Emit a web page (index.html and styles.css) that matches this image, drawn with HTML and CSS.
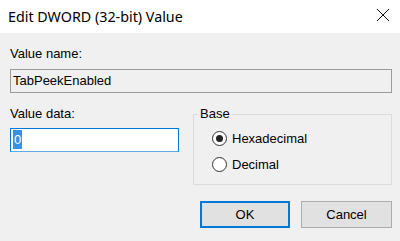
FILE: index.html
```html
<!DOCTYPE html>
<html lang="en">
<head>
    <meta charset="UTF-8">
    <meta name="viewport" content="width=device-width, initial-scale=1.0">
    <title>Edit DWORD (32-bit) Value</title>
    <link rel="stylesheet" href="styles.css">
</head>
<body>
    <!-- Title Bar -->
    <div class="titlebar">
        <div class="title">Edit DWORD (32-bit) Value</div>
        <div class="close">
            <svg width="14" height="14" viewBox="0 0 14 14">
                <path d="M1 1 L13 13 M13 1 L1 13" stroke="#111" stroke-width="1" fill="none"/>
            </svg>
        </div>
    </div>

    <!-- Dialog Body -->
    <div class="content">
        <div class="label">Value name:</div>
        <div class="textbox readonly">TabPeekEnabled</div>

        <div class="row">
            <div class="col">
                <div class="label">Value data:</div>
                <div class="textbox focused"><span class="selected">0</span></div>
            </div>

            <fieldset class="group">
                <legend>Base</legend>
                <div class="radios">
                    <div class="radio">
                        <span class="circle checked"></span>
                        <span>Hexadecimal</span>
                    </div>
                    <div class="radio">
                        <span class="circle"></span>
                        <span>Decimal</span>
                    </div>
                </div>
            </fieldset>
        </div>

        <div class="buttons">
            <div class="btn default">OK</div>
            <div class="btn">Cancel</div>
        </div>
    </div>
</body>
</html>
```

FILE: styles.css
```css
/* Classic Windows dialog */
:root {
    --dialog-bg: #f0f0f0;
    --text-color: #000;
    --accent: #0078d7;
    --border: #a0a0a0;
}

body {
    margin: 0;
    background-color: var(--dialog-bg);
    color: var(--text-color);
    font-family: 'Liberation Sans', Arial, sans-serif;
    font-size: 13px;
    width: 400px;
    height: 241px;
    overflow: hidden;
}

.titlebar {
    height: 33px;
    background-color: #fff;
    display: flex;
    align-items: center;
    justify-content: space-between;
}

.title {
    font-family: 'Noto Sans', 'Open Sans', sans-serif;
    font-size: 14.3px;
    padding-left: 8px;
    padding-bottom: 1px;
}

.close {
    width: 14px;
    height: 14px;
    margin-right: 10px;
    margin-top: -3px;
}

.close svg {
    display: block;
}

.content {
    padding: 13px 8px 0 10px;
}

.label {
    line-height: 16px;
    height: 16px;
}

.textbox {
    box-sizing: border-box;
    height: 24px;
    line-height: 22px;
    padding-left: 2px;
    border: 1px solid var(--border);
}

.textbox.readonly {
    margin-top: 7px;
    background-color: var(--dialog-bg);
    border-color: #9a9a9a;
}

.textbox.focused {
    margin-top: 6px;
    background-color: #fff;
    border-color: var(--accent);
    border-bottom-color: #5fa8e6;
}

.selected {
    background-color: #3d8fe0;
    color: #fff;
    display: inline-block;
    line-height: 19px;
    padding: 0 1px;
}

.row {
    display: grid;
    grid-template-columns: 169px 1fr;
    column-gap: 14px;
    margin-top: 13px;
}

.group {
    margin: 0;
    padding: 0 0 9px 0;
    border: 1px solid #dcdcdc;
}

.group legend {
    margin-left: 4px;
    padding: 0 2px;
    line-height: 16px;
}

.radios {
    padding: 5px 0 0 18px;
    display: flex;
    flex-direction: column;
    gap: 4px;
}

.radio {
    display: flex;
    align-items: center;
    gap: 5px;
    height: 22px;
}

.circle {
    box-sizing: border-box;
    width: 15px;
    height: 15px;
    border: 1px solid #333;
    border-radius: 50%;
    background-color: #fff;
    display: flex;
    align-items: center;
    justify-content: center;
}

.circle.checked::after {
    content: '';
    width: 7px;
    height: 7px;
    border-radius: 50%;
    background-color: #222;
}

.buttons {
    display: flex;
    justify-content: flex-end;
    gap: 11px;
    margin-top: 16px;
}

.btn {
    box-sizing: border-box;
    width: 91px;
    height: 27px;
    line-height: 25px;
    text-align: center;
    background-color: #e1e1e1;
    border: 1px solid #adadad;
}

.btn.default {
    width: 90px;
    border: 2px solid var(--accent);
    line-height: 23px;
}
```
